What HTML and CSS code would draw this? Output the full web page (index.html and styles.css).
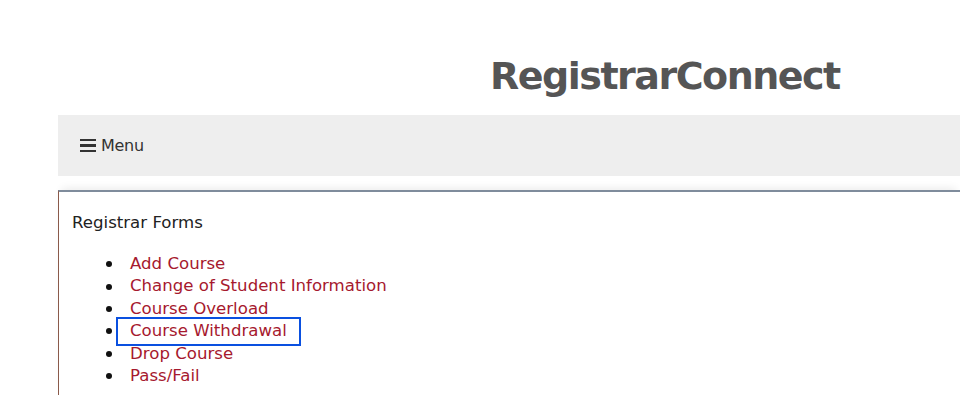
FILE: index.html
```html
<!DOCTYPE html>
<html>
<head>
<meta charset="utf-8">
<link rel="stylesheet" href="styles.css">
</head>
<body>
<div class="page">
  <header class="masthead">
    <h1 class="title">RegistrarConnect</h1>
  </header>
  <nav class="navbar">
    <span class="menu-btn"><span class="burger"><i></i><i></i><i></i></span>Menu</span>
  </nav>
  <section class="panel">
    <p class="panel-title">Registrar Forms</p>
    <ul class="forms">
      <li><a href="#">Add Course</a></li>
      <li><a href="#">Change of Student Information</a></li>
      <li><a href="#">Course Overload</a></li>
      <li><a href="#" class="focused">Course Withdrawal</a></li>
      <li><a href="#">Drop Course</a></li>
      <li><a href="#">Pass/Fail</a></li>
    </ul>
  </section>
</div>
</body>
</html>
```
FILE: styles.css
```css
html, body {
  margin: 0;
  padding: 0;
  background: #ffffff;
  overflow: hidden;
  height: 395px;
}
body {
  font-family: "DejaVu Sans", Tahoma, sans-serif;
  color: #222222;
}
.page {
  margin-left: 58px;
}
.masthead {
  height: 115px;
  display: flex;
  align-items: flex-start;
}
.title {
  margin: 53px 0 0 432px;
  font-size: 38px;
  font-weight: bold;
  color: #555555;
  line-height: 46px;
  letter-spacing: -1.5px;
  white-space: nowrap;
}
.navbar {
  height: 61px;
  background: #eeeeee;
  display: flex;
  align-items: center;
  padding-left: 22px;
}
.menu-btn {
  display: flex;
  align-items: center;
  font-size: 16px;
  color: #333333;
  letter-spacing: -0.3px;
}
.burger {
  display: flex;
  flex-direction: column;
  gap: 3px;
  width: 16px;
  margin-right: 5px;
}
.burger i {
  display: block;
  height: 2.5px;
  background: #333333;
}
.panel {
  margin-top: 14px;
  border-top: 2px solid #7f8c9c;
  border-left: 1px solid #8a5a4a;
  padding: 20px 0 0 13px;
  box-shadow: 0 -6px 8px -4px rgba(0,0,0,0.08);
  height: 183px;
}
.panel-title {
  margin: 0 0 19px 0;
  font-size: 16.6px;
  line-height: 22px;
}
.forms {
  margin: 0;
  padding-left: 34px;
  font-size: 16.6px;
  line-height: 22.4px;
  list-style: none;
}
.forms li {
  display: flex;
  align-items: center;
  gap: 18px;
}
.forms li::before {
  content: "";
  width: 6px;
  height: 6px;
  border-radius: 50%;
  background: #111111;
  flex: none;
}
.forms a {
  color: #a6192e;
  text-decoration: none;
}
.forms a.focused {
  outline: 2px solid #0a50e0;
  padding: 1px 12px 1px 12px;
  margin: -1px 0 -1px -12px;
}
```
